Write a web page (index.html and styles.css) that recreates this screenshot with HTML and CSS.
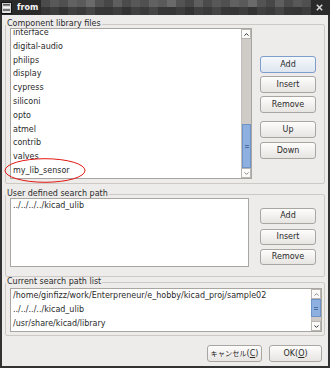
FILE: index.html
```
<!DOCTYPE html>
<html>
<head>
<meta charset="utf-8">
<link rel="stylesheet" href="styles.css">
</head>
<body>
<div class="window">
  <div class="titlebar">
    <svg class="app-icon" viewBox="0 0 11 12" width="11" height="12">
      <rect x="0.5" y="0.5" width="10" height="11" fill="#cfcfcf" stroke="#111"/>
      <rect x="2" y="2" width="7" height="1.6" fill="#5a5a5a"/>
      <rect x="2" y="4.6" width="7" height="1.6" fill="#f4f4f4"/>
      <rect x="2" y="7.2" width="7" height="1.6" fill="#5a5a5a"/>
      <rect x="2" y="9.6" width="7" height="1" fill="#f4f4f4"/>
    </svg>
    <span class="title">from</span>
    <div class="mosaic"></div>
    <svg class="close" viewBox="0 0 7 7" width="7" height="7">
      <path d="M0.8 0.8 L6.2 6.2 M6.2 0.8 L0.8 6.2" stroke="#d9d9d9" stroke-width="1.5"/>
    </svg>
  </div>

  <div class="body">
    <fieldset class="group g1">
      <legend>Component library files</legend>
      <div class="row">
        <div class="listbox lb1">
          <ul class="items items-scrolled">
            <li>interface</li>
            <li>digital-audio</li>
            <li>philips</li>
            <li>display</li>
            <li>cypress</li>
            <li>siliconi</li>
            <li>opto</li>
            <li>atmel</li>
            <li>contrib</li>
            <li>valves</li>
            <li>my_lib_sensor</li>
          </ul>
          <div class="vscroll">
            <div class="sb-btn"><svg viewBox="0 0 5 3" width="5" height="3"><path d="M0.5 2.6 L2.5 0.6 L4.5 2.6" fill="none" stroke="#333" stroke-width="1"/></svg></div>
            <div class="sb-trough">
              <div class="sb-thumb thumb1"><span class="grip"></span></div>
            </div>
            <div class="sb-btn"><svg viewBox="0 0 5 3" width="5" height="3"><path d="M0.5 0.4 L2.5 2.4 L4.5 0.4" fill="none" stroke="#888" stroke-width="1"/></svg></div>
          </div>
        </div>
        <div class="btncol col1">
          <button class="btn default">Add</button>
          <button class="btn">Insert</button>
          <button class="btn">Remove</button>
          <button class="btn up">Up</button>
          <button class="btn down">Down</button>
        </div>
      </div>
    </fieldset>

    <fieldset class="group g2">
      <legend>User defined search path</legend>
      <div class="row">
        <div class="listbox lb2">
          <ul class="items">
            <li>../../../../kicad_ulib</li>
          </ul>
        </div>
        <div class="btncol col2">
          <button class="btn">Add</button>
          <button class="btn">Insert</button>
          <button class="btn">Remove</button>
        </div>
      </div>
    </fieldset>

    <fieldset class="group g3">
      <legend>Current search path list</legend>
      <div class="listbox lb3">
        <ul class="items">
          <li>/home/ginfizz/work/Enterpreneur/e_hobby/kicad_proj/sample02</li>
          <li>../../../../kicad_ulib</li>
          <li>/usr/share/kicad/library</li>
        </ul>
        <div class="vscroll">
          <div class="sb-btn"><svg viewBox="0 0 5 3" width="5" height="3"><path d="M0.5 2.6 L2.5 0.6 L4.5 2.6" fill="none" stroke="#888" stroke-width="1"/></svg></div>
          <div class="sb-thumb thumb3"><span class="grip"></span></div>
          <div class="sb-trough"></div>
          <div class="sb-btn"><svg viewBox="0 0 5 3" width="5" height="3"><path d="M0.5 0.4 L2.5 2.4 L4.5 0.4" fill="none" stroke="#333" stroke-width="1"/></svg></div>
        </div>
      </div>
    </fieldset>

    <div class="actions">
      <button class="btn cancel"><span class="kana">キャンセル</span>(<u>C</u>)</button>
      <button class="btn ok">OK(<u>O</u>)</button>
    </div>
  </div>

  <svg class="mark" viewBox="0 0 82 26" width="82" height="26">
    <ellipse cx="41" cy="12.5" rx="40" ry="11.8" fill="none" stroke="#e3160f" stroke-width="1"/>
  </svg>
</div>
</body>
</html>
```

FILE: styles.css
```
* {
  box-sizing: border-box;
}

html, body {
  margin: 0;
  padding: 0;
}

body {
  background: #ffffff;
  font-family: "DejaVu Sans", "Noto Sans CJK JP", sans-serif;
  font-size: 8px;
  color: #2a2a2a;
}

.window {
  position: relative;
  width: 330px;
  height: 368px;
  display: flex;
  flex-direction: column;
  background: #323232;
}

/* ---------- title bar ---------- */
.titlebar {
  flex: none;
  height: 15px;
  display: flex;
  align-items: center;
  background: #2a2a2a;
}

.app-icon {
  flex: none;
  margin-left: 1px;
  display: block;
}

.title {
  flex: none;
  margin-left: 5px;
  font-weight: bold;
  font-size: 8px;
  line-height: 15px;
  color: #f4f4f4;
}

.mosaic {
  flex: 1;
  align-self: stretch;
  margin-left: 3px;
  margin-right: 5px;
  background:
    repeating-linear-gradient(90deg,
      #4b4b4b 0 9px, #585858 9px 18px, #505050 18px 27px, #616161 27px 36px,
      #5a5a5a 36px 45px, #6a6a6a 45px 54px, #535353 54px 63px, #474747 63px 72px,
      #5e5e5e 72px 81px) top / 100% 7px no-repeat,
    repeating-linear-gradient(90deg,
      #363636 0 9px, #3d3d3d 9px 18px, #333333 18px 27px, #404040 27px 36px,
      #3a3a3a 36px 45px, #454545 45px 54px, #373737 54px 63px) bottom / 100% 8px no-repeat;
}

.close {
  flex: none;
  display: block;
  margin-right: 7px;
}

/* ---------- body ---------- */
.body {
  flex: 1;
  margin: 0 2px 2px 2px;
  padding: 4px 3px 4px 3px;
  background: #edeceb;
  display: flex;
  flex-direction: column;
}

.group {
  margin: 0;
  min-width: 0;
  border: 1px solid #cdcac6;
  border-radius: 2px;
  padding: 0 8px 4px 4px;
}

.group legend {
  margin-left: -4px;
  padding: 0 1px;
  height: 10px;
  line-height: 10px;
  font-size: 8px;
  color: #2a2a2a;
}

.g2 {
  margin-top: 5px;
  padding-bottom: 9px;
}

.g3 {
  padding-right: 2px;
  padding-bottom: 3px;
}

.row {
  display: flex;
  justify-content: space-between;
  align-items: flex-start;
}

/* ---------- list boxes ---------- */
.listbox {
  display: flex;
  background: #ffffff;
  border: 1px solid #a9a6a2;
  overflow: hidden;
}

.lb1 {
  width: 242px;
  height: 151px;
  margin-top: -1px;
}

.lb2 {
  width: 239px;
  height: 69px;
  margin-top: -1px;
}

.g2 .col2 {
  margin-top: -2px;
}

.lb3 {
  height: 44px;
  margin-top: 1px;
}

.items {
  flex: 1;
  min-width: 0;
  margin: 0;
  padding: 0;
  list-style: none;
  overflow: hidden;
}

.items li {
  height: 14px;
  line-height: 14px;
  padding-left: 2px;
  white-space: nowrap;
}

.items-scrolled {
  margin-top: -3px;
}

.items-scrolled li {
  height: 13.8px;
  line-height: 13.8px;
}

/* ---------- scrollbars ---------- */
.vscroll {
  flex: none;
  width: 10px;
  display: flex;
  flex-direction: column;
  background: #cfccc8;
}

.sb-btn {
  flex: none;
  height: 10px;
  display: flex;
  align-items: center;
  justify-content: center;
  background: #fbfbfa;
  border: 1px solid #b9b6b2;
}

.sb-btn svg {
  display: block;
}

.sb-trough {
  flex: 1;
  display: flex;
  flex-direction: column;
  justify-content: flex-end;
  background: #cfccc8;
  border-left: 1px solid #c2bfbb;
}

.sb-thumb {
  flex: none;
  display: flex;
  align-items: center;
  justify-content: center;
  background: #8db0e1;
  border: 1px solid #6e93c9;
}

.thumb1 {
  height: 44px;
}

.thumb3 {
  height: 18px;
}

.grip {
  width: 4px;
  height: 3px;
  border-top: 1px solid #4e6f9f;
  border-bottom: 1px solid #4e6f9f;
}

/* ---------- buttons ---------- */
.btncol {
  flex: none;
  width: 56px;
  display: flex;
  flex-direction: column;
}

.col1 {
  padding-top: 27px;
  gap: 3px;
}

.col1 .up {
  margin-top: 5px;
}

.col1 .down {
  margin-top: 1px;
}

.col2 {
  padding-top: 11px;
  gap: 4.5px;
}

.btn {
  display: block;
  width: 56px;
  height: 17px;
  padding: 0;
  margin: 0;
  font-family: "DejaVu Sans", "Noto Sans CJK JP", sans-serif;
  font-size: 8px;
  line-height: 15px;
  color: #2a2a2a;
  text-align: center;
  border: 1px solid #a9a6a2;
  border-radius: 3px;
  background: linear-gradient(#fdfdfc, #e7e5e2);
}

.col2 .btn {
  height: 16px;
  line-height: 14px;
}

.btn.default {
  border-color: #7d9dcb;
  background: linear-gradient(#f5f8fc, #dfe6ef);
}

.btn u {
  text-decoration: underline;
}

.actions {
  margin-top: 9px;
  display: flex;
  justify-content: flex-end;
  gap: 7px;
  padding-right: 3px;
}

.cancel {
  width: 55px;
}

.ok {
  width: 53px;
}

.kana {
  font-size: 7.2px;
}

/* ---------- annotation ---------- */
.mark {
  position: absolute;
  left: 4px;
  top: 158px;
  display: block;
}
```
